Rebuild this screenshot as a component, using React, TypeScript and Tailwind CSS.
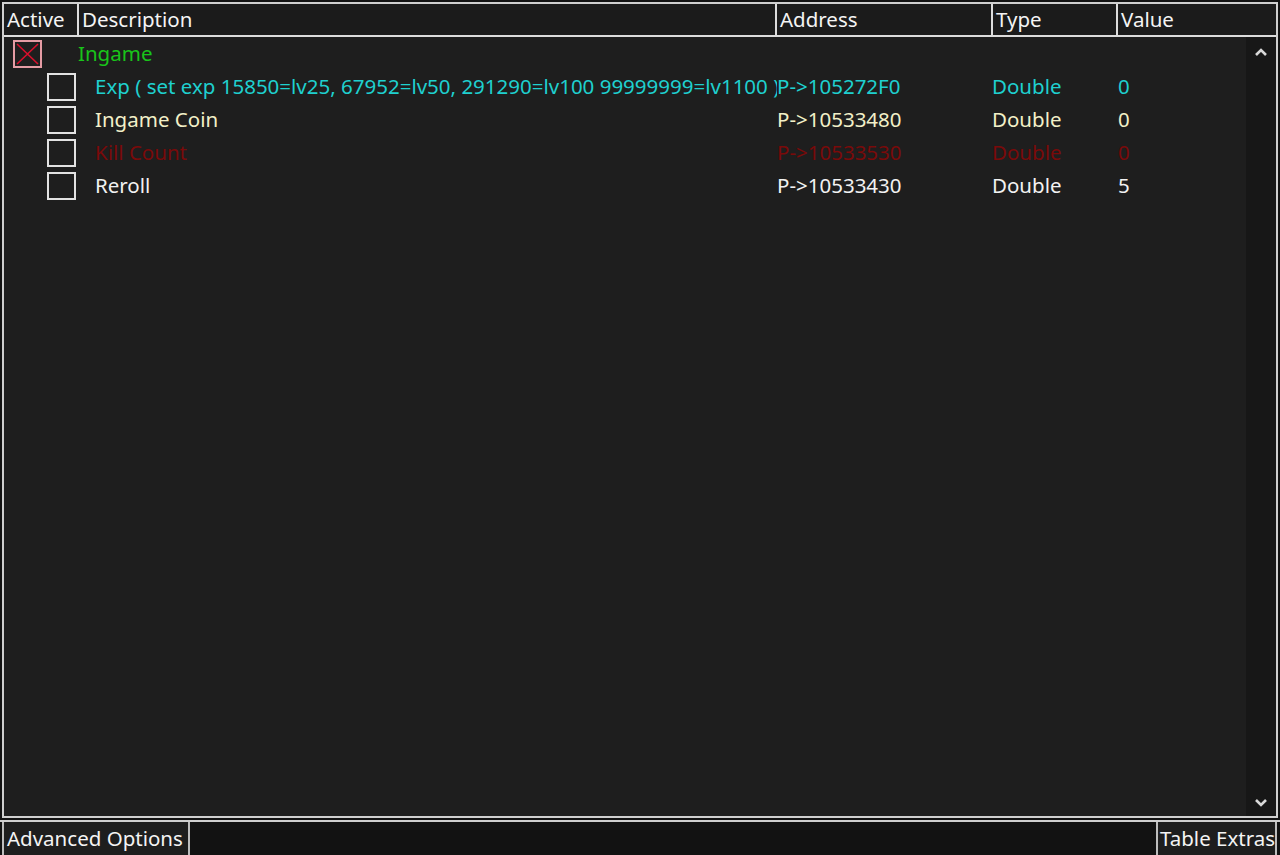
const font = { fontFamily: '"Noto Sans", "Open Sans", sans-serif' };

type Entry = {
  desc: string;
  address: string;
  type: string;
  value: string;
  color: string;
};

const entries: Entry[] = [
  {
    desc: "Exp ( set exp 15850=lv25, 67952=lv50, 291290=lv100 99999999=lv1100 )",
    address: "P->105272F0",
    type: "Double",
    value: "0",
    color: "text-[#1fd0cf]",
  },
  { desc: "Ingame Coin", address: "P->10533480", type: "Double", value: "0", color: "text-[#f2f0c8]" },
  { desc: "Kill Count", address: "P->10533530", type: "Double", value: "0", color: "text-[#7a0a0a]" },
  { desc: "Reroll", address: "P->10533430", type: "Double", value: "5", color: "text-[#f2f2f2]" },
];

function Chevron({ up }: { up?: boolean }) {
  return (
    <svg width="14" height="10" viewBox="0 0 14 10">
      <path
        d={up ? "M2 8 L7 3 L12 8" : "M2 2 L7 7 L12 2"}
        fill="none"
        stroke="#d8d8d8"
        strokeWidth="2.6"
      />
    </svg>
  );
}

function HeaderCell({ w, label }: { w: string; label: string }) {
  return (
    <div className={`${w} h-full shrink-0 border-r-2 border-[#dcdcdc] pl-[3px] flex items-center text-[#f4f4f4]`}>
      {label}
    </div>
  );
}

export default function App() {
  return (
    <div className="w-[1280px] h-[855px] bg-[#121212] flex flex-col text-[20.5px] leading-normal overflow-hidden" style={font}>
      {/* table */}
      <div className="mx-[2px] mt-[2px] h-[816px] border-2 border-[#cfcfcf] bg-[#1e1e1e] flex flex-col">
        <div className="h-[33px] flex border-b-2 border-[#dcdcdc] bg-[#1b1b1b]">
          <HeaderCell w="w-[75px]" label="Active" />
          <HeaderCell w="w-[698px]" label="Description" />
          <HeaderCell w="w-[216px]" label="Address" />
          <HeaderCell w="w-[125px]" label="Type" />
          <div className="flex-1 h-full pl-[3px] flex items-center text-[#f4f4f4]">Value</div>
        </div>

        <div className="flex-1 flex">
          <div className="flex-1">
            {/* group row */}
            <div className="h-[33px] flex items-center">
              <div className="ml-[9px] w-[29px] h-[28px] border-2 border-[#e59ca4] relative">
                <svg className="absolute inset-0" width="25" height="24" viewBox="0 0 25 24">
                  <path d="M2 2 L23 22 M23 2 L2 22" stroke="#d8102c" strokeWidth="1.6" />
                </svg>
              </div>
              <span className="ml-[36px] text-[#19c41a]">Ingame</span>
            </div>

            {entries.map((e) => (
              <div key={e.address} className={`h-[33px] flex items-center ${e.color}`}>
                <div className="ml-[43px] w-[29px] h-[28px] border-2 border-[#e2e2e2] shrink-0" />
                <div className="w-[701px] shrink-0 pl-[19px] whitespace-nowrap overflow-hidden">{e.desc}</div>
                <div className="w-[215px] shrink-0">{e.address}</div>
                <div className="w-[126px] shrink-0">{e.type}</div>
                <div>{e.value}</div>
              </div>
            ))}
          </div>

          {/* scrollbar */}
          <div className="w-[30px] bg-[#171717] flex flex-col items-center justify-between pt-[10px] pb-[8px]">
            <Chevron up />
            <Chevron />
          </div>
        </div>
      </div>

      {/* bottom bar */}
      <div className="mt-[2px] flex-1 border-t-2 border-[#cfcfcf] flex justify-between">
        <div className="ml-[2px] w-[188px] border-x-2 border-[#bdbdbd] bg-[#1e1e1e] flex items-center pl-[3px] text-[#f4f4f4] whitespace-nowrap">
          Advanced Options
        </div>
        <div className="mr-[3px] w-[121px] border-x-2 border-[#bdbdbd] bg-[#1e1e1e] flex items-center pl-[2px] text-[#f4f4f4] whitespace-nowrap">
          Table Extras
        </div>
      </div>
    </div>
  );
}
